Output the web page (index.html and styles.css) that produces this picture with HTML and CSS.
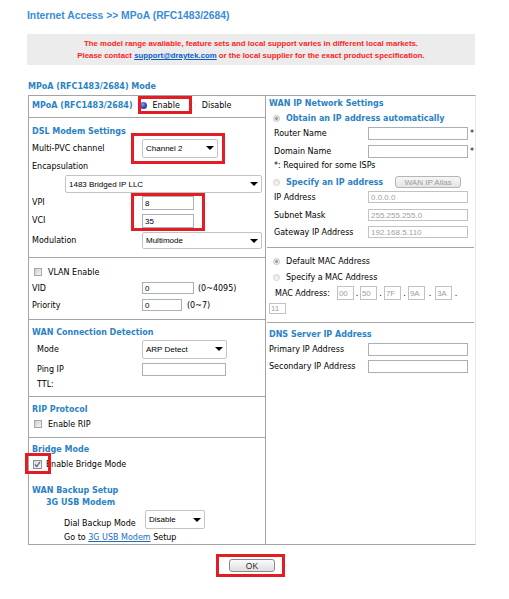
FILE: index.html
```html
<!DOCTYPE html>
<html>
<head>
<meta charset="utf-8">
<title>MPoA (RFC1483/2684)</title>
<link rel="stylesheet" href="styles.css">
</head>
<body>
<div class="page">
  <h1 class="crumb">Internet Access &gt;&gt; MPoA (RFC1483/2684)</h1>
  <div class="notice">
    <p>The model range available, feature sets and local support varies in different local markets.</p>
    <p>Please contact <a href="#">support@draytek.com</a> or the local supplier for the exact product specification.</p>
  </div>
  <h2 class="mode-title">MPoA (RFC1483/2684) Mode</h2>

  <div class="panel">
    <div class="col left">
      <div class="sec s1">
        <div class="row r18">
          <b class="t">MPoA (RFC1483/2684)</b>
          <span class="radio on en-radio"></span><span class="en-lab">Enable</span>
          <span class="radio off dis-radio"></span><span class="dis-lab">Disable</span>
        </div>
      </div>

      <div class="sec s2">
        <div class="row r14"><b class="t">DSL Modem Settings</b></div>
        <div class="row r20"><span class="lab">Multi-PVC channel</span><div class="sel w76 h19"><span>Channel 2</span><i class="caret"></i></div></div>
        <div class="row r12 mt2"><span>Encapsulation</span></div>
        <div class="row r18 mt3"><div class="sel enc"><span>1483 Bridged IP LLC</span><i class="caret"></i></div></div>
        <div class="row r14 mt3 top"><span class="lab">VPI</span><input class="in w52" type="text" value="8"></div>
        <div class="row r14 mt4 top"><span class="lab">VCI</span><input class="in w52" type="text" value="35"></div>
        <div class="row r17 mt4"><span class="lab">Modulation</span><div class="sel w120 h17"><span>Multimode</span><i class="caret"></i></div></div>
      </div>

      <div class="sec s3">
        <div class="row r14"><span class="cb"></span><span>VLAN Enable</span></div>
        <div class="row r14 mt2"><span class="lab">VID</span><input class="in w52 h12" type="text" value="0"><span class="hint">(0~4095)</span></div>
        <div class="row r14 mt3"><span class="lab">Priority</span><input class="in w40 h12" type="text" value="0"><span class="hint h2">(0~7)</span></div>
      </div>

      <div class="sec s4">
        <div class="row r14"><b class="t">WAN Connection Detection</b></div>
        <div class="row r20"><span class="lab ind">Mode</span><div class="sel w85 h19"><span>ARP Detect</span><i class="caret"></i></div></div>
        <div class="row r14 mt3"><span class="lab ind">Ping IP</span><input class="in w84 h13" type="text" value=""></div>
        <div class="row r12 mt2"><span class="lab ind">TTL:</span></div>
      </div>

      <div class="sec s5">
        <div class="row r14"><b class="t">RIP Protocol</b></div>
        <div class="row r14 mt1"><span class="cb"></span><span>Enable RIP</span></div>
      </div>

      <div class="sec s6">
        <div class="row r14"><b class="t">Bridge Mode</b></div>
        <div class="row r14 mt1"><span class="cb on"><svg viewBox="0 0 9 9" width="9" height="9"><polyline points="2,4.5 3.8,6.6 7,1.8" fill="none" stroke="#56608a" stroke-width="1.2"/></svg></span><span class="bridge-lab">Enable Bridge Mode</span></div>
        <div class="row r12 mt13"><b class="t">WAN Backup Setup</b></div>
        <div class="row r12"><b class="t sub">3G USB Modem</b></div>
        <div class="row r20 mt2 dial"><span class="lab dial-lab">Dial Backup Mode</span><div class="sel w60 h19"><span>Disable</span><i class="caret"></i></div></div>
        <div class="row r12 mt1 goto"><span>Go to <a href="#">3G USB Modem</a> Setup</span></div>
      </div>
    </div>

    <div class="col right">
      <div class="sec rs1">
        <div class="row r12"><b class="t">WAN IP Network Settings</b></div>
        <div class="row r12 mt3"><span class="radio dison"></span><b class="t">Obtain an IP address automatically</b></div>
        <div class="row r14 mt2"><span class="rlab">Router Name</span><input class="in w100 h13" type="text" value=""><span class="ast">*</span></div>
        <div class="row r14 mt4"><span class="rlab">Domain Name</span><input class="in w100 h13" type="text" value=""><span class="ast">*</span></div>
        <div class="row r12 mt1"><span class="rlab">*: Required for some ISPs</span></div>
        <div class="row r14 mt4"><span class="radio dis"></span><b class="t">Specify an IP address</b><span class="btn alias">WAN IP Alias</span></div>
        <div class="row r14 mt1"><span class="rlab">IP Address</span><input class="in w100 h12 off" type="text" value="0.0.0.0"></div>
        <div class="row r14 mt4"><span class="rlab">Subnet Mask</span><input class="in w100 h12 off" type="text" value="255.255.255.0"></div>
        <div class="row r14 mt3"><span class="rlab">Gateway IP Address</span><input class="in w100 h12 off" type="text" value="192.168.5.110"></div>
      </div>

      <div class="sec rs2">
        <div class="row r12"><span class="radio dison"></span><span>Default MAC Address</span></div>
        <div class="row r12 mt4"><span class="radio dis"></span><span>Specify a MAC Address</span></div>
        <div class="row r14 mt3 mac">
          <span class="mac-lab">MAC Address:</span>
          <input class="in mc off" type="text" value="00"><span class="dot d6">.</span>
          <input class="in mc off" type="text" value="50"><span class="dot d7">.</span>
          <input class="in mc off" type="text" value="7F"><span class="dot d7">.</span>
          <input class="in mc off" type="text" value="9A"><span class="dot d10">.</span>
          <input class="in mc off" type="text" value="3A"><span class="dot d8">.</span>
        </div>
        <div class="row r12 mt2"><input class="in mc h12 off" type="text" value="11"></div>
      </div>

      <div class="sec rs3">
        <div class="row r12"><b class="t">DNS Server IP Address</b></div>
        <div class="row r14 mt2"><span class="dlab">Primary IP Address</span><input class="in w100 h13" type="text" value=""></div>
        <div class="row r14 mt3"><span class="dlab">Secondary IP Address</span><input class="in w100 h13" type="text" value=""></div>
      </div>
    </div>
  </div>

  <div class="actions"><span class="btn ok">OK</span></div>

  <span class="mark m-enable"></span>
  <span class="mark m-pvc"></span>
  <span class="mark m-vpi"></span>
  <span class="mark m-bridge"></span>
  <span class="mark m-ok"></span>
</div>
</body>
</html>
```

FILE: styles.css
```css
* { box-sizing: border-box; }
html, body { margin: 0; padding: 0; background: #fff; }
body {
  font-family: "DejaVu Sans", Verdana, sans-serif;
  font-size: 8px;
  color: #000;
}
.page {
  position: relative;
  width: 509px;
  height: 599px;
  padding: 10px 0 0 27px;
}
.crumb {
  margin: 0;
  height: 12px;
  font: bold 10.3px/12px "Liberation Sans", Arial, sans-serif;
  color: #3b8dd5;
}
.notice {
  margin-top: 12px;
  width: 448px;
  height: 31px;
  background: #ececec;
  padding-top: 4px;
  text-align: center;
  font: bold 7.8px/12px "Liberation Sans", Arial, sans-serif;
  color: #ff1d1d;
}
.notice p { margin: 0; }
.notice a { color: #0a5cc8; text-decoration: underline; }
.mode-title {
  margin: 16px 0 0 1px;
  height: 12px;
  font-size: 8px;
  line-height: 12px;
  font-weight: bold;
  color: #2a82c5;
}
.panel {
  margin: 2px 0 0 1px;
  width: 448px;
  height: 450px;
  display: grid;
  grid-template-columns: 236px 1fr;
  border-top: 1px solid #a4a4a4;
  border-left: 1px solid #a4a4a4;
  border-bottom: 1px solid #a4a4a4;
  border-right: 1px solid #e6e6e6;
}
.col { display: flex; flex-direction: column; }
.col.left { padding-left: 3px; }
.col.right { border-left: 1px solid #a4a4a4; padding-left: 3px; }
.sec { border-bottom: 1px solid #a4a4a4; margin-left: -3px; padding-left: 3px; }
.right .sec { margin-left: -2px; padding-left: 2px; margin-right: 2px; }
.right .sec.rs3 { border-bottom: 0; }
.s1 { padding-bottom: 3px; }
.s2 { padding-top: 6px; padding-bottom: 8px; }
.s3 { padding-top: 7px; padding-bottom: 7px; }
.s4 { padding-top: 5px; padding-bottom: 6px; }
.s5 { padding-top: 5px; padding-bottom: 6px; }
.s6 { padding-top: 4px; border-bottom: 0; }
.rs1 { padding-top: 1px; padding-bottom: 8px; }
.rs2 { padding-top: 7px; padding-bottom: 8px; }
.rs3 { padding-top: 5px; }

.row { display: flex; align-items: center; white-space: nowrap; }
.row.top { align-items: flex-start; }
.r12 { height: 12px; }
.r14 { height: 14px; }
.r17 { height: 17px; }
.r18 { height: 18px; }
.r20 { height: 20px; }
.mt1 { margin-top: 1px; }
.mt2 { margin-top: 2px; }
.mt3 { margin-top: 3px; }
.mt4 { margin-top: 4px; }
.mt13 { margin-top: 13px; }

.t { font-weight: bold; color: #2a82c5; }
.t.sub { margin-left: 14px; }
.lab { width: 110px; flex: none; }
.lab.ind { padding-left: 5px; }
.top .lab { line-height: 14px; }
.rlab { width: 99px; flex: none; padding-left: 5px; }
.dlab { width: 99px; flex: none; }
.hint { margin-left: 4px; }
.hint.h2 { margin-left: 5px; }
.ast { margin-left: 2px; font-size: 8px; }

.radio {
  display: inline-block;
  flex: none;
  width: 7px;
  height: 7px;
  border-radius: 50%;
}
.radio.on {
  background: radial-gradient(circle at 40% 35%, #8ea0ec 0, #3a4fc0 45%, #1f2b7a 100%);
}
.radio.off { border: 1px solid #ececec; background: #fff; }
.radio.dison {
  border: 1px solid #c4c4c4;
  background: radial-gradient(circle, #9a9a9a 0, #9a9a9a 35%, #eeeeee 45%, #e2e2e2 100%);
  margin: 0 6px 0 4px;
}
.radio.dis {
  border: 1px solid #d0d0d0;
  background: linear-gradient(#e6e6e6, #f8f8f8);
  margin: 0 6px 0 4px;
}
.en-radio { margin-left: 7px; }
.en-lab { margin-left: 6px; }
.dis-radio { margin-left: 9px; }
.dis-lab { margin-left: 6px; }

.cb {
  display: inline-block;
  flex: none;
  width: 8px;
  height: 8px;
  margin: 0 6px 0 2px;
  border: 1px solid #a6a6a6;
  background: linear-gradient(135deg, #cfcfcf, #f4f4f4);
}
.cb.on {
  width: 9px;
  height: 9px;
  margin: 0 4px 0 1px;
  border: 1px solid #8f8f8f;
  background: linear-gradient(135deg, #d8dce6, #f6f6f6);
  position: relative;
}
.cb.on svg { position: absolute; left: -1px; top: -1px; }

.sel {
  display: flex;
  align-items: center;
  flex: none;
  background: #fff;
  border: 1px solid #c4c4c4;
  border-radius: 2px;
  padding-left: 3px;
  font: 8px "Liberation Sans", Arial, sans-serif;
  color: #000;
}
.sel .caret {
  margin-left: auto;
  margin-right: 3px;
  width: 0;
  height: 0;
  border-left: 4px solid transparent;
  border-right: 4px solid transparent;
  border-top: 4px solid #000;
}
.sel.enc { margin-left: 33px; width: 197px; height: 18px; }
.w60 { width: 60px; }
.w76 { width: 76px; }
.w85 { width: 85px; }
.w120 { width: 120px; }
.h17 { height: 17px; }
.h19 { height: 19px; }

.in {
  flex: none;
  margin: 0;
  padding: 0 2px;
  height: 14px;
  border: 1px solid #a9b0b8;
  background: #fff;
  font: 8px "Liberation Sans", Arial, sans-serif;
  color: #000;
  outline: none;
}
.in.off { color: #a0a0a0; border-color: #c2c2c2; }
.w40 { width: 40px; }
.w52 { width: 52px; }
.w84 { width: 84px; }
.w100 { width: 100px; }
.in.h12 { height: 12px; }
.in.h13 { height: 13px; }
.in.mc { width: 17px; height: 14px; padding: 0 1px; }
.in.mc.h12 { height: 11px; }

.mac-lab { margin-left: 6px; margin-right: 7px; }
.dot { text-align: center; flex: none; }
.d6 { width: 6px; }
.d7 { width: 7px; }
.d8 { width: 8px; }
.d10 { width: 10px; }

.dial { align-items: flex-start; }
.dial-lab { width: 81px; margin-left: 32px; align-self: flex-end; line-height: 12px; }
.goto { padding-left: 32px; }
.goto a { color: #1a6dbf; text-decoration: underline; }

.btn {
  display: inline-flex;
  align-items: center;
  justify-content: center;
  border-radius: 3px;
  font-family: "Liberation Sans", Arial, sans-serif;
}
.btn.alias {
  margin-left: 12px;
  width: 66px;
  height: 12px;
  border: 1px solid #b5b5b5;
  background: linear-gradient(#f6f6f6, #e4e4e4);
  color: #9c9c9c;
  font-size: 8px;
}
.actions {
  width: 448px;
  margin-left: 1px;
  padding-top: 14px;
  display: flex;
  justify-content: center;
}
.btn.ok {
  width: 46px;
  height: 13px;
  border: 1px solid #8a8a8a;
  background: linear-gradient(#fbfbfb, #dedede);
  color: #2a2a2a;
  font-size: 8.5px;
}

.mark {
  position: absolute;
  border: 3px solid #e41d25;
  pointer-events: none;
}
.m-enable { left: 138px; top: 96px; width: 54px; height: 18px; }
.m-pvc { left: 131px; top: 133px; width: 94px; height: 31px; }
.m-vpi { left: 131px; top: 193px; width: 74px; height: 38px; }
.m-bridge { left: 25px; top: 453px; width: 26px; height: 21px; }
.m-ok { left: 216px; top: 554px; width: 69px; height: 23px; }
```
